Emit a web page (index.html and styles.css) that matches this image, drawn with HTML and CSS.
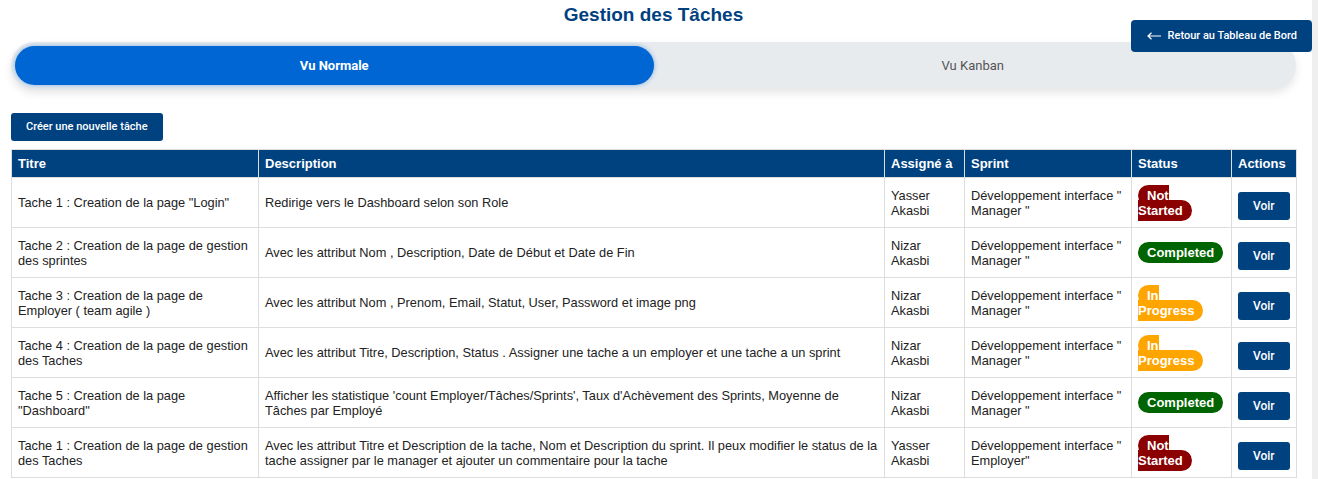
FILE: index.html
```html
<!DOCTYPE html>
<html lang="fr">
<head>
<meta charset="utf-8">
<title>Gestion des Tâches</title>
<link rel="stylesheet" href="styles.css">
</head>
<body>
<button class="back-btn" type="button"><svg class="back-arrow" width="14" height="8" viewBox="0 0 14 8"><path d="M14 4H1M4.5 0.8L1 4l3.5 3.2" fill="none" stroke="#fff" stroke-width="1.2"/></svg><span>Retour au Tableau de Bord</span></button>
<main class="page">
  <h2 class="page-title">Gestion des Tâches</h2>
  <div class="tabs">
    <div class="tab tab-active">Vu Normale</div>
    <div class="tab">Vu Kanban</div>
  </div>
  <button class="create-btn" type="button">Créer une nouvelle tâche</button>
  <table class="tasks">
    <colgroup>
      <col class="c-title"><col class="c-desc"><col class="c-assign"><col class="c-sprint"><col class="c-status"><col class="c-actions">
    </colgroup>
    <thead>
      <tr><th>Titre</th><th>Description</th><th>Assigné à</th><th>Sprint</th><th>Status</th><th>Actions</th></tr>
    </thead>
    <tbody>
      <tr>
        <td>Tache 1 : Creation de la page "Login"</td>
        <td class="desc">Redirige vers le Dashboard selon son Role</td>
        <td>Yasser Akasbi</td>
        <td>Développement interface " Manager "</td>
        <td class="status"><span class="badge badge-red">Not Started</span></td>
        <td class="actions"><button class="view-btn" type="button">Voir</button></td>
      </tr>
      <tr>
        <td>Tache 2 : Creation de la page de gestion des sprintes</td>
        <td class="desc">Avec les attribut Nom , Description, Date de Début et Date de Fin</td>
        <td>Nizar Akasbi</td>
        <td>Développement interface " Manager "</td>
        <td class="status"><span class="badge badge-green">Completed</span></td>
        <td class="actions"><button class="view-btn" type="button">Voir</button></td>
      </tr>
      <tr>
        <td>Tache 3 : Creation de la page de Employer ( team agile )</td>
        <td class="desc">Avec les attribut Nom , Prenom, Email, Statut, User, Password et image png</td>
        <td>Nizar Akasbi</td>
        <td>Développement interface " Manager "</td>
        <td class="status"><span class="badge badge-orange">In Progress</span></td>
        <td class="actions"><button class="view-btn" type="button">Voir</button></td>
      </tr>
      <tr>
        <td>Tache 4 : Creation de la page de gestion des Taches</td>
        <td class="desc">Avec les attribut Titre, Description, Status . Assigner une tache a un employer et une tache a un sprint</td>
        <td>Nizar Akasbi</td>
        <td>Développement interface " Manager "</td>
        <td class="status"><span class="badge badge-orange">In Progress</span></td>
        <td class="actions"><button class="view-btn" type="button">Voir</button></td>
      </tr>
      <tr>
        <td>Tache 5 : Creation de la page "Dashboard"</td>
        <td class="desc">Afficher les statistique 'count Employer/Tâches/Sprints', Taux d'Achèvement des Sprints, Moyenne de Tâches par Employé</td>
        <td>Nizar Akasbi</td>
        <td>Développement interface " Manager "</td>
        <td class="status"><span class="badge badge-green">Completed</span></td>
        <td class="actions"><button class="view-btn" type="button">Voir</button></td>
      </tr>
      <tr>
        <td>Tache 1 : Creation de la page de gestion des Taches</td>
        <td class="desc">Avec les attribut Titre et Description de la tache, Nom et Description du sprint. Il peux modifier le status de la tache assigner par le manager et ajouter un commentaire pour la tache</td>
        <td>Yasser Akasbi</td>
        <td>Développement interface " Employer"</td>
        <td class="status"><span class="badge badge-red">Not Started</span></td>
        <td class="actions"><button class="view-btn" type="button">Voir</button></td>
      </tr>
    </tbody>
  </table>
</main>
</body>
</html>
```

FILE: styles.css
```css
html {
  overflow: hidden;
  background: #efefef;
}

body {
  position: relative;
  margin: 0 6px 0 0;
  min-height: 100vh;
  background: #fff;
  font-family: "Liberation Sans", Arial, sans-serif;
  color: #222;
}

.page {
  padding: 0 16px 0 11px;
}

.page-title {
  margin: 0;
  padding: 3px 0 16px;
  text-align: center;
  font-size: 19px;
  line-height: 23px;
  font-weight: bold;
  color: #00417f;
}

.back-btn {
  position: absolute;
  top: 20px;
  right: 0;
  display: flex;
  align-items: center;
  gap: 7px;
  padding: 9px 15px 9px 16px;
  border: none;
  border-radius: 4px;
  background: #00417f;
  color: #fff;
  font-family: Roboto, "Liberation Sans", sans-serif;
  font-size: 11px;
  font-weight: 500;
  line-height: 14px;
}

.back-arrow {
  display: block;
}

.tabs {
  display: flex;
  padding: 4px;
  border-radius: 26px;
  background: #e8ebee;
  box-shadow: 0 4px 8px rgba(0, 0, 0, 0.1);
}

.tab {
  flex: 1;
  padding: 12px 0;
  text-align: center;
  border-radius: 22px;
  font-family: Roboto, "Liberation Sans", sans-serif;
  font-size: 13px;
  line-height: 15px;
  color: #555;
}

.tab-active {
  background: #0066d4;
  color: #fff;
  font-weight: bold;
  box-shadow: 0 0 5px rgba(0, 102, 212, 0.45);
}

.create-btn {
  display: block;
  margin: 24px 0 8px;
  padding: 7px 15px;
  border: none;
  border-radius: 3px;
  background: #00417f;
  color: #fff;
  font-family: Roboto, "Liberation Sans", sans-serif;
  font-size: 11px;
  font-weight: 500;
  line-height: 14px;
}

.tasks {
  width: 100%;
  table-layout: fixed;
  border-collapse: collapse;
  font-size: 13px;
}

.c-title { width: 247px; }
.c-desc { width: 626px; }
.c-assign { width: 80px; }
.c-sprint { width: 167px; }
.c-status { width: 100px; }
.c-actions { width: 65px; }

.tasks th,
.tasks td {
  border: 1px solid #ddd;
  text-align: left;
  vertical-align: middle;
}

.tasks th {
  padding: 6px;
  background: #00417f;
  color: #fff;
  font-weight: bold;
  line-height: 15px;
}

.tasks td {
  padding: 9.5px 6px;
  font-size: 12.8px;
  line-height: 15px;
}

.tasks td.desc {
  padding-right: 2px;
}

.tasks td.status {
  font-size: 13px;
}

.tasks td.actions {
  padding: 13px 6px 6px;
}

.badge {
  padding: 3px 9px;
  border-radius: 12px;
  color: #fff;
  font-weight: bold;
}

.badge-red { background: #8b0000; }
.badge-green { background: #006400; }
.badge-orange { background: #ffa500; }

.view-btn {
  display: block;
  padding: 7px 15px;
  border: none;
  border-radius: 3px;
  background: #00417f;
  color: #fff;
  font-family: Roboto, "Liberation Sans", sans-serif;
  font-size: 12px;
  font-weight: 500;
  line-height: 14px;
}
```
